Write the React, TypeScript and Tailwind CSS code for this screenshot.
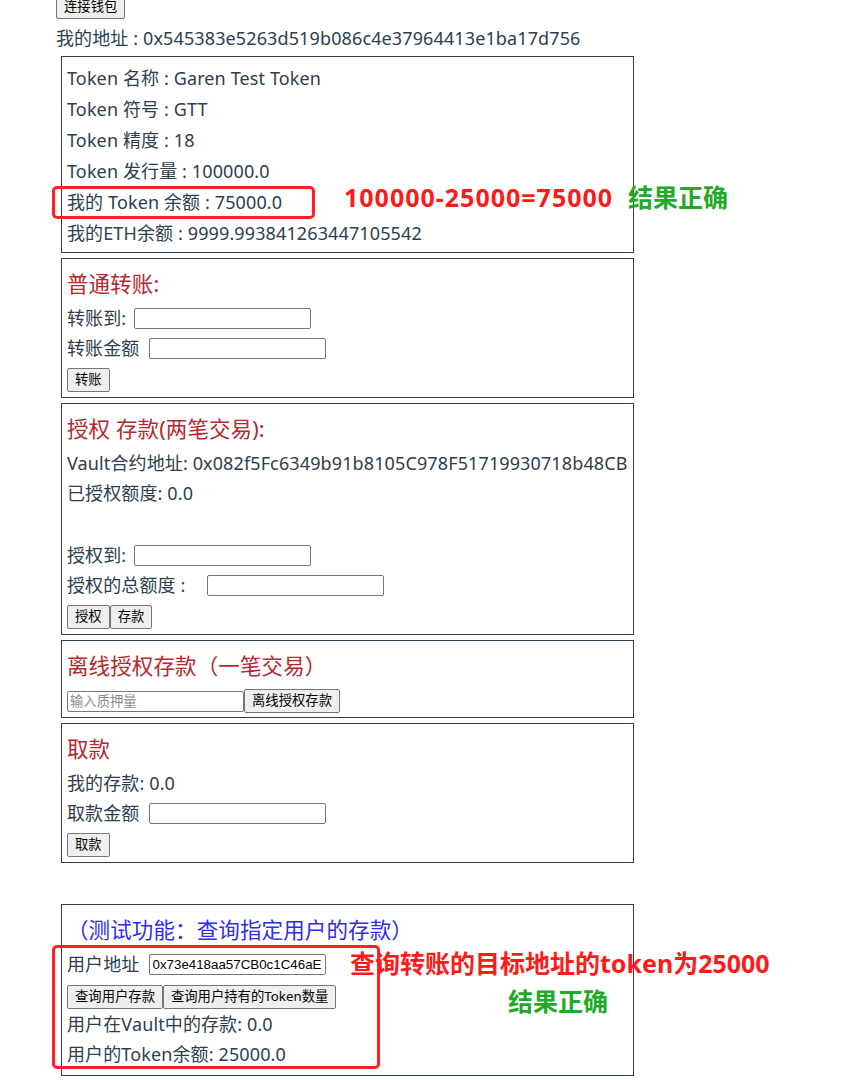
import React from 'react';

const font = "font-['Noto_Sans','Noto_Sans_CJK_SC',sans-serif]";

const Btn = ({ children }: { children: React.ReactNode }) => (
    <button className="h-[24px] px-[7px] text-[13.33px] leading-none tracking-normal text-black bg-[#efefef] border border-[#767676] rounded-[2px]">
        {children}
    </button>
);

const Field = ({ value, placeholder }: { value?: string; placeholder?: string }) => (
    <input
        readOnly
        value={value ?? ''}
        placeholder={placeholder}
        className="w-[177px] h-[21px] px-[2px] text-[13.33px] tracking-normal font-['Liberation_Sans','Noto_Sans_CJK_SC',sans-serif] text-black placeholder:text-[#8a8a8a] bg-white border border-[#767676] rounded-[2px] outline-none"
    />
);

const Box = ({ children, className = "" }: { children: React.ReactNode; className?: string }) => (
    <div className={`ml-[5px] w-[573px] border border-[#2c3e50] px-[5px] pt-[6px] ${className}`}>
        {children}
    </div>
);

const Title = ({ children, blue = false }: { children: React.ReactNode; blue?: boolean }) => (
    <div className={`h-[38px] flex items-center text-[21.5px] ${blue ? 'text-[#2f2af0]' : 'text-[#b5282d]'}`}>{children}</div>
);

const Row = ({ children }: { children: React.ReactNode }) => (
    <div className="h-[30px] flex items-center whitespace-nowrap">{children}</div>
);

export default function App() {
    return (
        <div className={`relative min-h-screen bg-white text-[#2c3e50] text-[18px] tracking-[0.12px] ${font}`}>
            <div className="pl-[56px] flex flex-col items-start">
                <div className="-mt-[5px] flex">
                    <Btn>连接钱包</Btn>
                </div>
                <div className="h-[32px] mt-[3px] flex items-center">我的地址 : 0x545383e5263d519b086c4e37964413e1ba17d756</div>

                {/* token info */}
                <Box className="mt-[2px] pb-[3px] pt-[6px]">
                    <div className="leading-[31px]">
                        <div>Token 名称 : Garen Test Token</div>
                        <div>Token 符号 : GTT</div>
                        <div>Token 精度 : 18</div>
                        <div>Token 发行量 : 100000.0</div>
                        <div>我的 Token 余额 : 75000.0</div>
                        <div>我的ETH余额 : 9999.993841263447105542</div>
                    </div>
                </Box>

                {/* normal transfer */}
                <Box className="mt-[5px] pb-[5px]">
                    <Title>普通转账:</Title>
                    <Row>转账到:<span className="ml-[8px] flex"><Field /></span></Row>
                    <Row>转账金额<span className="ml-[10px] flex"><Field /></span></Row>
                    <div className="mt-[5px] flex"><Btn>转账</Btn></div>
                </Box>

                {/* approve + deposit */}
                <Box className="mt-[5px] pb-[5px]">
                    <Title>授权 存款(两笔交易):</Title>
                    <Row>Vault合约地址: 0x082f5Fc6349b91b8105C978F51719930718b48CB</Row>
                    <Row>已授权额度: 0.0</Row>
                    <div className="h-[32px]" />
                    <Row>授权到:<span className="ml-[8px] flex"><Field /></span></Row>
                    <Row>授权的总额度 :<span className="ml-[22px] flex"><Field /></span></Row>
                    <div className="mt-[5px] flex"><Btn>授权</Btn><Btn>存款</Btn></div>
                </Box>

                {/* permit deposit */}
                <Box className="mt-[5px] pb-[4px]">
                    <Title>离线授权存款（一笔交易）</Title>
                    <div className="mt-[4px] flex items-center">
                        <Field placeholder="输入质押量" />
                        <Btn>离线授权存款</Btn>
                    </div>
                </Box>

                {/* withdraw */}
                <Box className="mt-[5px] pb-[5px]">
                    <Title>取款</Title>
                    <Row>我的存款: 0.0</Row>
                    <Row>取款金额<span className="ml-[10px] flex"><Field /></span></Row>
                    <div className="mt-[5px] flex"><Btn>取款</Btn></div>
                </Box>

                {/* test query */}
                <Box className="mt-[41px] pb-[6px]">
                    <Title blue>（测试功能：查询指定用户的存款）</Title>
                    <Row>用户地址<span className="ml-[10px] flex"><Field value="0x73e418aa57CB0c1C46aE" /></span></Row>
                    <div className="mt-[6px] flex"><Btn>查询用户存款</Btn><Btn>查询用户持有的Token数量</Btn></div>
                    <Row>用户在Vault中的存款: 0.0</Row>
                    <Row>用户的Token余额: 25000.0</Row>
                </Box>
            </div>

            {/* screenshot annotations */}
            <div className="absolute left-[52px] top-[186px] w-[263px] h-[33px] border-[3px] border-[#ff2020] rounded-[5px]" />
            <div className="absolute left-[344px] top-[181px] text-[25px] font-bold tracking-[1px] text-[#ff1a1a] whitespace-nowrap leading-[32px]">100000-25000=75000</div>
            <div className="absolute left-[628px] top-[181px] text-[25px] font-bold tracking-normal text-[#1faa2a] whitespace-nowrap leading-[32px]">结果正确</div>
            <div className="absolute left-[52px] top-[945px] w-[328px] h-[124px] border-[3px] border-[#ff2020] rounded-[5px]" />
            <div className="absolute left-[350px] top-[947px] text-[25px] font-bold tracking-normal text-[#ff1a1a] whitespace-nowrap leading-[32px]">查询转账的目标地址的token为25000</div>
            <div className="absolute left-[508px] top-[985px] text-[25px] font-bold tracking-normal text-[#1faa2a] whitespace-nowrap leading-[32px]">结果正确</div>
        </div>
    );
}
